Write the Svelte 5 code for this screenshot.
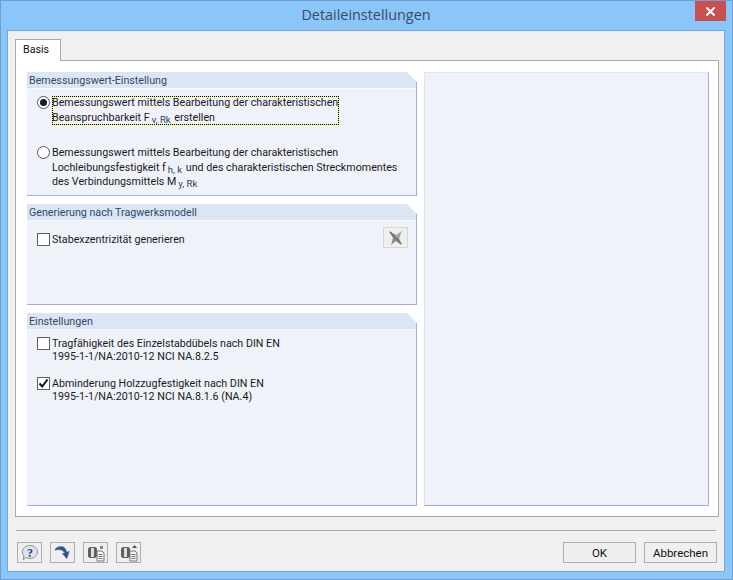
<script>
  const tools = ['help', 'arrow', 'export', 'import'];
</script>

<div class="window">
  <div class="titlebar">
    <span class="title">Detaileinstellungen</span>
    <button class="close" aria-label="Schließen">
      <svg width="11" height="9" viewBox="0 0 11 9"><path d="M1.5 .5 9.5 8.5M9.5 .5 1.5 8.5" stroke="#fff" stroke-width="2" fill="none"/></svg>
    </button>
  </div>
  <div class="client">
    <div class="tabstrip"><div class="tab">Basis</div></div>
    <div class="tabpanel">
      <div class="left">
        <section class="group g1">
          <h3>Bemessungswert-Einstellung</h3>
          <div class="body b1">
            <div class="opt">
              <span class="radio on"><i></i></span>
              <span class="focus">Bemessungswert mittels Bearbeitung der charakteristischen<br>Beanspruchbarkeit F<sub>v, Rk</sub> erstellen</span>
            </div>
            <div class="opt second">
              <span class="radio"></span>
              <span class="txt">Bemessungswert mittels Bearbeitung der charakteristischen<br>Lochleibungsfestigkeit f<sub>h, k</sub> und des charakteristischen Streckmomentes<br>des Verbindungsmittels M<sub>y, Rk</sub></span>
            </div>
          </div>
        </section>
        <section class="group g2">
          <h3>Generierung nach Tragwerksmodell</h3>
          <div class="body b2">
            <div class="opt single">
              <span class="check"></span>
              <span class="txt">Stabexzentrizität generieren</span>
            </div>
            <button class="xbtn" aria-label="Generieren">
              <svg width="18" height="18" viewBox="0 0 18 18"><path d="M2 2 9 6 15 2 12 9 15 16 9 12 4 16 6 9Z" fill="#8f8f93"/><path d="M3 3 14 15" stroke="#6d6d72" stroke-width="1.5"/><path d="M14 3 9 8" stroke="#b8b8bc" stroke-width="1.5"/></svg>
            </button>
          </div>
        </section>
        <section class="group g3">
          <h3>Einstellungen</h3>
          <div class="body b3">
            <div class="opt">
              <span class="check"></span>
              <span class="txt">Tragfähigkeit des Einzelstabdübels nach DIN EN<br>1995-1-1/NA:2010-12 NCI NA.8.2.5</span>
            </div>
            <div class="opt third">
              <span class="check">
                <svg width="11" height="11" viewBox="0 0 11 11"><path d="M1.5 5.5 4.2 8.5 9.5 1.5" stroke="#111" stroke-width="2" fill="none"/></svg>
              </span>
              <span class="txt">Abminderung Holzzugfestigkeit nach DIN EN<br>1995-1-1/NA:2010-12 NCI NA.8.1.6 (NA.4)</span>
            </div>
          </div>
        </section>
      </div>
      <div class="right"></div>
    </div>
    <div class="rule"></div>
    <div class="footer">
      <div class="tools">
        {#each tools as t}
          <button class="tool" aria-label={t}>
            {#if t === 'help'}
              <svg width="20" height="18" viewBox="0 0 20 18"><path d="M10 1.5C14.5 1.500 17.500 4.500 17.500 8S14.500 14.500 10 14.500C8.500 14.500 7 14 6 13.500L3 16 4 12C3 11 2.500 9.500 2.500 8 2.500 4.500 5.500 1.500 10 1.500Z" fill="#dfe2e8" stroke="#8d9199"/><text x="10" y="13" text-anchor="middle" class="q">?</text></svg>
            {:else if t === 'arrow'}
              <svg width="20" height="18" viewBox="0 0 20 18"><path d="M2 5C6 1 12 1 14 8L16.500 7 14 15 9 9.500 11.500 9C10 6 6 5 2 6.500Z" fill="#2f5180" stroke="#8aa5c0" stroke-width=".6"/></svg>
            {:else}
              <svg width="20" height="18" viewBox="0 0 20 18">
                <rect x="2" y="3" width="9" height="11" rx="2.500" fill="#5e5e5e"/>
                <rect x="5" y="4" width="3" height="9" fill="#ddd"/>
                <path d="M11 7H16L18 9V17H11Z" fill="#f4f4f4" stroke="#777"/>
                <path d="M12.500 10.500H16.500M12.500 12.500H16.500M12.500 14.500H16.500" stroke="#777"/>
                {#if t === 'export'}
                  <path d="M14 2h3v3h-3z" fill="#8a8a8a"/>
                {:else}
                  <path d="M15.500 1 18 4H13Z" fill="#555"/>
                {/if}
              </svg>
            {/if}
          </button>
        {/each}
      </div>
      <div class="actions">
        <button class="btn">OK</button>
        <button class="btn">Abbrechen</button>
      </div>
    </div>
  </div>
</div>

<style>
  :global(body) { margin: 0; }
  .window {
    box-sizing: border-box; width: 733px; height: 580px;
    background: #8bc6fa; border: 1px solid #6f9fd0;
    padding: 0 7px 7px 6px;
    display: flex; flex-direction: column;
    font: 10.7px Roboto, "Liberation Sans", Arial, sans-serif; color: #1a1a1a;
  }
  .titlebar { height: 29px; position: relative; flex: none; display: flex; justify-content: center; align-items: center; }
  .title { font: 14.4px "Open Sans", sans-serif; color: #3b4a68; position: relative; top: -1px; }
  .close {
    position: absolute; right: -1px; top: 0; width: 31px; height: 20px;
    background: #c75050; border: 0; padding: 0;
    display: flex; align-items: center; justify-content: center;
  }
  .client {
    flex: 1; background: #f0f0f0; border: 1px solid #7ba5d4;
    padding: 8px 5px 0 7px;
    display: flex; flex-direction: column; min-height: 0;
  }
  .tabstrip { height: 21px; flex: none; display: flex; }
  .tab {
    box-sizing: border-box; width: 46px; height: 22px; background: #fff;
    border: 1px solid #a9a9a9; border-bottom: 0;
    padding: 3px 0 0 7px; position: relative; z-index: 1; color: #111;
  }
  .tabpanel {
    box-sizing: border-box; height: 457px; flex: none; background: #fff;
    border: 1px solid #a9a9a9;
    padding: 11px 9px 10px 11px;
    display: flex; gap: 7px;
  }
  .left { flex: none; width: 390px; display: flex; flex-direction: column; gap: 8px; }
  .group {
    box-sizing: border-box;
    border-bottom: 1px solid #aaa8e4;
    display: flex; flex-direction: column; position: relative;
  }
  .group::after {
    content: ""; position: absolute; right: 0; top: 10px; bottom: 0;
    width: 1px; background: #aaa8e4;
  }
  .g1 { height: 124px; }
  .g2 { height: 101px; }
  .g3 { flex: 1; }
  h3 {
    margin: 0; height: 16px; flex: none; font: inherit; color: #2d4a66;
    background: #dce5f4; padding: 2px 0 0 2px; box-sizing: border-box;
    clip-path: polygon(0 0, calc(100% - 10px) 0, 100% 10px, 100% 100%, 0 100%);
  }
  .body {
    position: relative; flex: 1; padding: 0 10px; background: #eff2f9;
    border-top: 1px solid #f8f9fc;
  }
  .opt { display: flex; align-items: flex-start; gap: 1px; line-height: 13px; position: relative; }
  .b1 { padding-top: 7px; }
  .b1 .opt { line-height: 14.5px; }
  .second { margin-top: 21px; }
  .b2 { padding-top: 12px; }
  .b3 { padding-top: 7px; }
  .third { margin-top: 14px; }
  .radio {
    box-sizing: border-box; width: 13px; height: 13px; border-radius: 50%;
    border: 1px solid #555; background: #fff; flex: none; margin: 0 1px 0 0;
    display: flex; align-items: center; justify-content: center;
  }
  .radio i { width: 7px; height: 7px; border-radius: 50%; background: #1a1a2e; }
  .check {
    box-sizing: border-box; width: 13px; height: 13px; border: 1px solid #5e5e5e;
    background: #fff; flex: none; margin: 0 1px 0 0; display: flex;
    align-items: center; justify-content: center;
  }
  .focus {
    background-image:
      repeating-linear-gradient(90deg, #000 0 1px, #ff0 1px 2px),
      repeating-linear-gradient(90deg, #000 0 1px, #ff0 1px 2px),
      repeating-linear-gradient(0deg, #000 0 1px, #ff0 1px 2px),
      repeating-linear-gradient(0deg, #000 0 1px, #ff0 1px 2px);
    background-size: 100% 1px, 100% 1px, 1px 100%, 1px 100%;
    background-position: 0 0, 0 100%, 0 0, 100% 0;
    background-repeat: no-repeat;
  }
  .txt, .focus { white-space: nowrap; }
  .focus { padding-right: 1px; }
  sub {
    font-size: 9.5px; vertical-align: baseline; position: relative; top: 2px;
    line-height: 0; color: #1f3f5f; margin: 0 1px 0 2px;
  }
  .xbtn {
    position: absolute; left: 356px; top: 6px; width: 25px; height: 21px;
    background: #efefeb; border: 1px solid #d3d8d0; padding: 0;
    display: flex; align-items: center; justify-content: center;
  }
  .right {
    flex: none; box-sizing: border-box; width: 285px; background: #eff2f9;
    border-top: 1px solid #dce5f4; border-left: 1px solid #dce5f4;
    border-right: 1px solid #aaa8e4; border-bottom: 1px solid #aaa8e4;
  }
  .rule { height: 1px; background: #a9a9a9; margin: 13px 3px 0 1px; flex: none; }
  .footer { flex: 1; display: flex; justify-content: space-between; align-items: flex-start; padding: 11px 2px 0 2px; }
  .tools { display: flex; gap: 8px; }
  .tool {
    box-sizing: border-box; width: 25px; height: 21px; background: #efefef;
    border: 1px solid #aeaeae; padding: 0; display: flex;
    align-items: center; justify-content: center;
  }
  .q { font: bold 12px "Liberation Serif", serif; fill: #1e3f80; }
  .actions { display: flex; gap: 8px; }
  .btn {
    box-sizing: border-box; width: 73px; height: 21px; background: #efefef;
    border: 1px solid #aeaeae; padding: 0; color: #111;
    font: 11.5px Roboto, "Liberation Sans", Arial, sans-serif;
  }
</style>
